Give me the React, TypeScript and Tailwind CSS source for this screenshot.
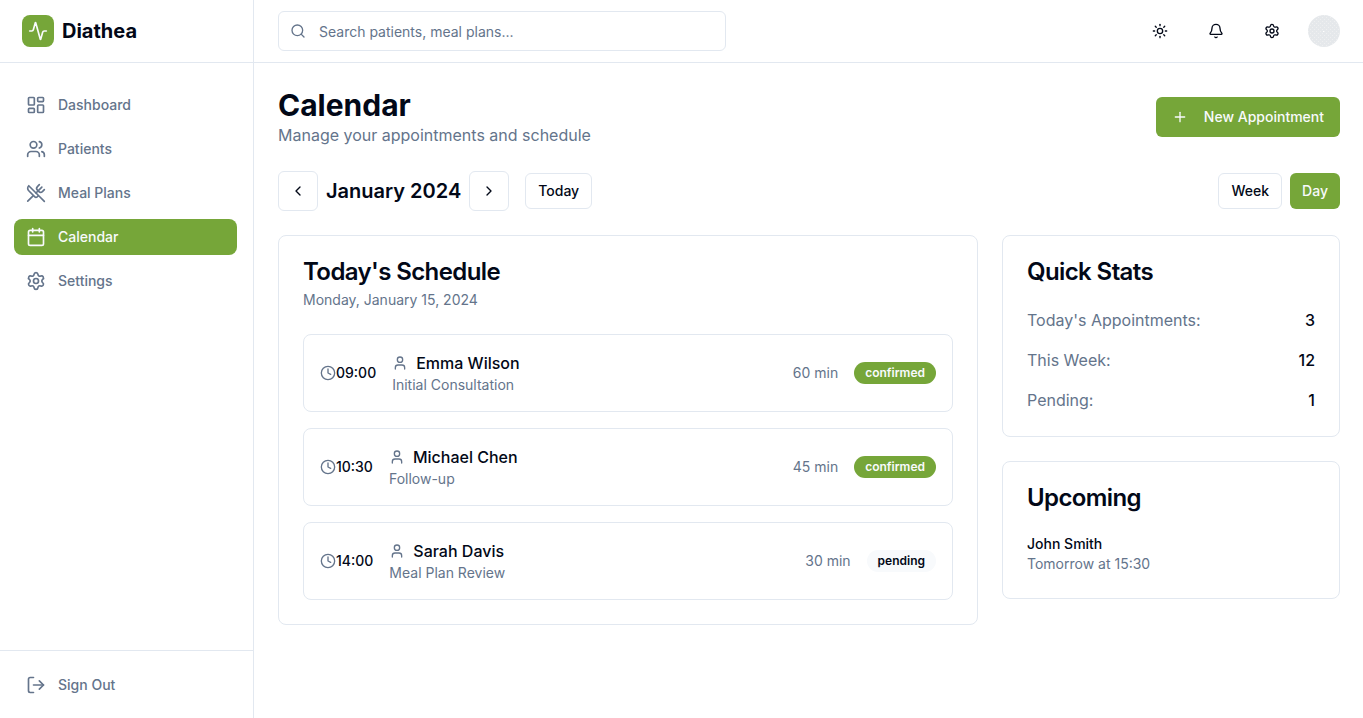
import {
  Activity, Bell, Calendar, ChevronLeft, ChevronRight, Clock, LayoutDashboard,
  LogOut, Plus, Search, Settings, Sun, User, Users, UtensilsCrossed,
} from "lucide-react";

const navItems = [
  { label: "Dashboard", icon: LayoutDashboard, active: false },
  { label: "Patients", icon: Users, active: false },
  { label: "Meal Plans", icon: UtensilsCrossed, active: false },
  { label: "Calendar", icon: Calendar, active: true },
  { label: "Settings", icon: Settings, active: false },
];

const appointments = [
  { time: "09:00", name: "Emma Wilson", type: "Initial Consultation", duration: "60 min", status: "confirmed" },
  { time: "10:30", name: "Michael Chen", type: "Follow-up", duration: "45 min", status: "confirmed" },
  { time: "14:00", name: "Sarah Davis", type: "Meal Plan Review", duration: "30 min", status: "pending" },
];

const stats = [
  { label: "Today's Appointments:", value: "3" },
  { label: "This Week:", value: "12" },
  { label: "Pending:", value: "1" },
];

const actions = [
  { label: "Toggle theme", icon: Sun },
  { label: "Notifications", icon: Bell },
  { label: "Settings", icon: Settings },
];

function Sidebar() {
  return (
    <aside className="flex w-[254px] shrink-0 flex-col border-r border-[#e2e8f0]">
      <div className="flex h-[63px] items-center gap-2 border-b border-[#e2e8f0] pl-[22px]">
        <div className="flex size-8 items-center justify-center rounded-lg bg-[#76a639] text-[#f8fafc]">
          <Activity className="size-5" />
        </div>
        <span className="text-xl font-bold">Diathea</span>
      </div>
      <nav className="flex flex-1 flex-col gap-2 pt-6 pr-4 pl-[14px]">
        {navItems.map(({ label, icon: Icon, active }) => (
          <a
            key={label}
            href="#"
            className={
              active
                ? "flex h-9 items-center gap-3 rounded-lg bg-[#76a639] px-3 text-sm font-medium text-[#f8fafc]"
                : "flex h-9 items-center gap-3 rounded-lg px-3 text-sm font-medium text-[#64748b]"
            }
          >
            <Icon className="size-5" />
            {label}
          </a>
        ))}
      </nav>
      <div className="border-t border-[#e2e8f0] pt-4 pr-4 pb-[15px] pl-[14px]">
        <button className="flex h-9 w-full items-center gap-3 rounded-lg px-3 text-sm font-medium text-[#64748b]">
          <LogOut className="size-5" />
          Sign Out
        </button>
      </div>
    </aside>
  );
}

function Avatar() {
  return (
    <svg viewBox="0 0 32 32" className="size-8" aria-hidden="true">
      <defs>
        <pattern id="avatar-dots" width="4" height="4" patternUnits="userSpaceOnUse">
          <rect width="4" height="4" fill="#e5e8eb" />
          <rect width="1" height="1" fill="#eff0f1" />
          <rect x="2" y="2" width="1" height="1" fill="#eff0f1" />
        </pattern>
      </defs>
      <circle cx="16" cy="16" r="16" fill="url(#avatar-dots)" />
      <rect x="15" y="16" width="1" height="1" fill="#ffffff" />
    </svg>
  );
}

function Header() {
  return (
    <header className="flex h-[63px] items-center justify-between border-b border-[#e2e8f0] pr-[23px] pl-6">
      <div className="relative w-full max-w-md">
        <Search className="absolute top-3 left-3 size-4 text-[#64748b]" />
        <input
          type="text"
          aria-label="Search"
          placeholder="Search patients, meal plans..."
          className="h-10 w-full rounded-md border border-[#e2e8f0] bg-white pr-3 pl-10 text-sm placeholder:text-[#64748b]"
        />
      </div>
      <div className="flex items-center gap-4">
        {actions.map(({ label, icon: Icon }) => (
          <button key={label} aria-label={label} className="flex size-10 items-center justify-center rounded-md">
            <Icon className="size-4" />
          </button>
        ))}
        <button aria-label="Account" className="size-8 rounded-full">
          <Avatar />
        </button>
      </div>
    </header>
  );
}

function Card({ title, subtitle, children }: { title: string; subtitle?: string; children: React.ReactNode }) {
  return (
    <section className="rounded-lg border border-[#e2e8f0] p-6">
      <h2 className="text-2xl leading-6 font-semibold tracking-tight">{title}</h2>
      {subtitle && <p className="mt-[6px] text-sm text-[#64748b]">{subtitle}</p>}
      <div className="mt-6">{children}</div>
    </section>
  );
}

function Schedule() {
  return (
    <Card title="Today's Schedule" subtitle="Monday, January 15, 2024">
      <ul className="flex flex-col gap-4">
        {appointments.map((a) => (
          <li key={a.time} className="flex items-center justify-between rounded-lg border border-[#e2e8f0] p-4">
            <div className="flex items-center gap-4">
              <div className="flex items-center text-sm font-medium">
                <Clock className="size-4 text-[#64748b]" />
                {a.time}
              </div>
              <div>
                <div className="flex items-center gap-2 font-medium">
                  <User className="size-4 text-[#64748b]" />
                  {a.name}
                </div>
                <p className="text-sm text-[#64748b]">{a.type}</p>
              </div>
            </div>
            <div className="flex items-center gap-4">
              <span className="text-sm text-[#64748b]">{a.duration}</span>
              <span
                className={
                  a.status === "confirmed"
                    ? "rounded-full border border-transparent bg-[#76a639] px-[10px] py-0.5 text-xs font-semibold text-[#f8fafc]"
                    : "rounded-full border border-transparent bg-[#f8fafc] px-[10px] py-0.5 text-xs font-semibold"
                }
              >
                {a.status}
              </span>
            </div>
          </li>
        ))}
      </ul>
    </Card>
  );
}

export default function App() {
  return (
    <div className="flex min-h-screen bg-white font-[Inter,sans-serif] text-[#020817]">
      <Sidebar />
      <div className="min-w-0 flex-1">
        <Header />
        <main className="flex flex-col gap-6 pt-6 pr-[23px] pb-6 pl-6">
          <div className="flex items-center justify-between">
            <div>
              <h1 className="text-3xl font-bold">Calendar</h1>
              <p className="text-[#64748b]">Manage your appointments and schedule</p>
            </div>
            <button className="flex h-10 items-center gap-4 rounded-md bg-[#76a639] px-4 text-sm font-medium text-[#f8fafc]">
              <Plus className="size-4" />
              New Appointment
            </button>
          </div>
          <div className="flex items-center justify-between">
            <div className="flex items-center gap-4">
              <div className="flex items-center gap-2">
                <button aria-label="Previous month" className="flex size-10 items-center justify-center rounded-md border border-[#e2e8f0]">
                  <ChevronLeft className="size-4" />
                </button>
                <h2 className="text-xl font-semibold">January 2024</h2>
                <button aria-label="Next month" className="flex size-10 items-center justify-center rounded-md border border-[#e2e8f0]">
                  <ChevronRight className="size-4" />
                </button>
              </div>
              <button className="h-9 rounded-md border border-[#e2e8f0] px-3 text-sm font-medium">Today</button>
            </div>
            <div className="flex gap-2">
              <button className="h-9 rounded-md border border-[#e2e8f0] px-3 text-sm font-medium">Week</button>
              <button className="h-9 rounded-md bg-[#76a639] px-3 text-sm font-medium text-[#f8fafc]">Day</button>
            </div>
          </div>
          <div className="grid grid-cols-3 items-start gap-6">
            <div className="col-span-2">
              <Schedule />
            </div>
            <div className="flex flex-col gap-6">
              <Card title="Quick Stats">
                <dl className="flex flex-col gap-4">
                  {stats.map((s) => (
                    <div key={s.label} className="flex justify-between">
                      <dt className="text-[#64748b]">{s.label}</dt>
                      <dd className="font-medium">{s.value}</dd>
                    </div>
                  ))}
                </dl>
              </Card>
              <Card title="Upcoming">
                <div className="text-sm">
                  <p className="font-medium">John Smith</p>
                  <p className="text-[#64748b]">Tomorrow at 15:30</p>
                </div>
              </Card>
            </div>
          </div>
        </main>
      </div>
    </div>
  );
}
